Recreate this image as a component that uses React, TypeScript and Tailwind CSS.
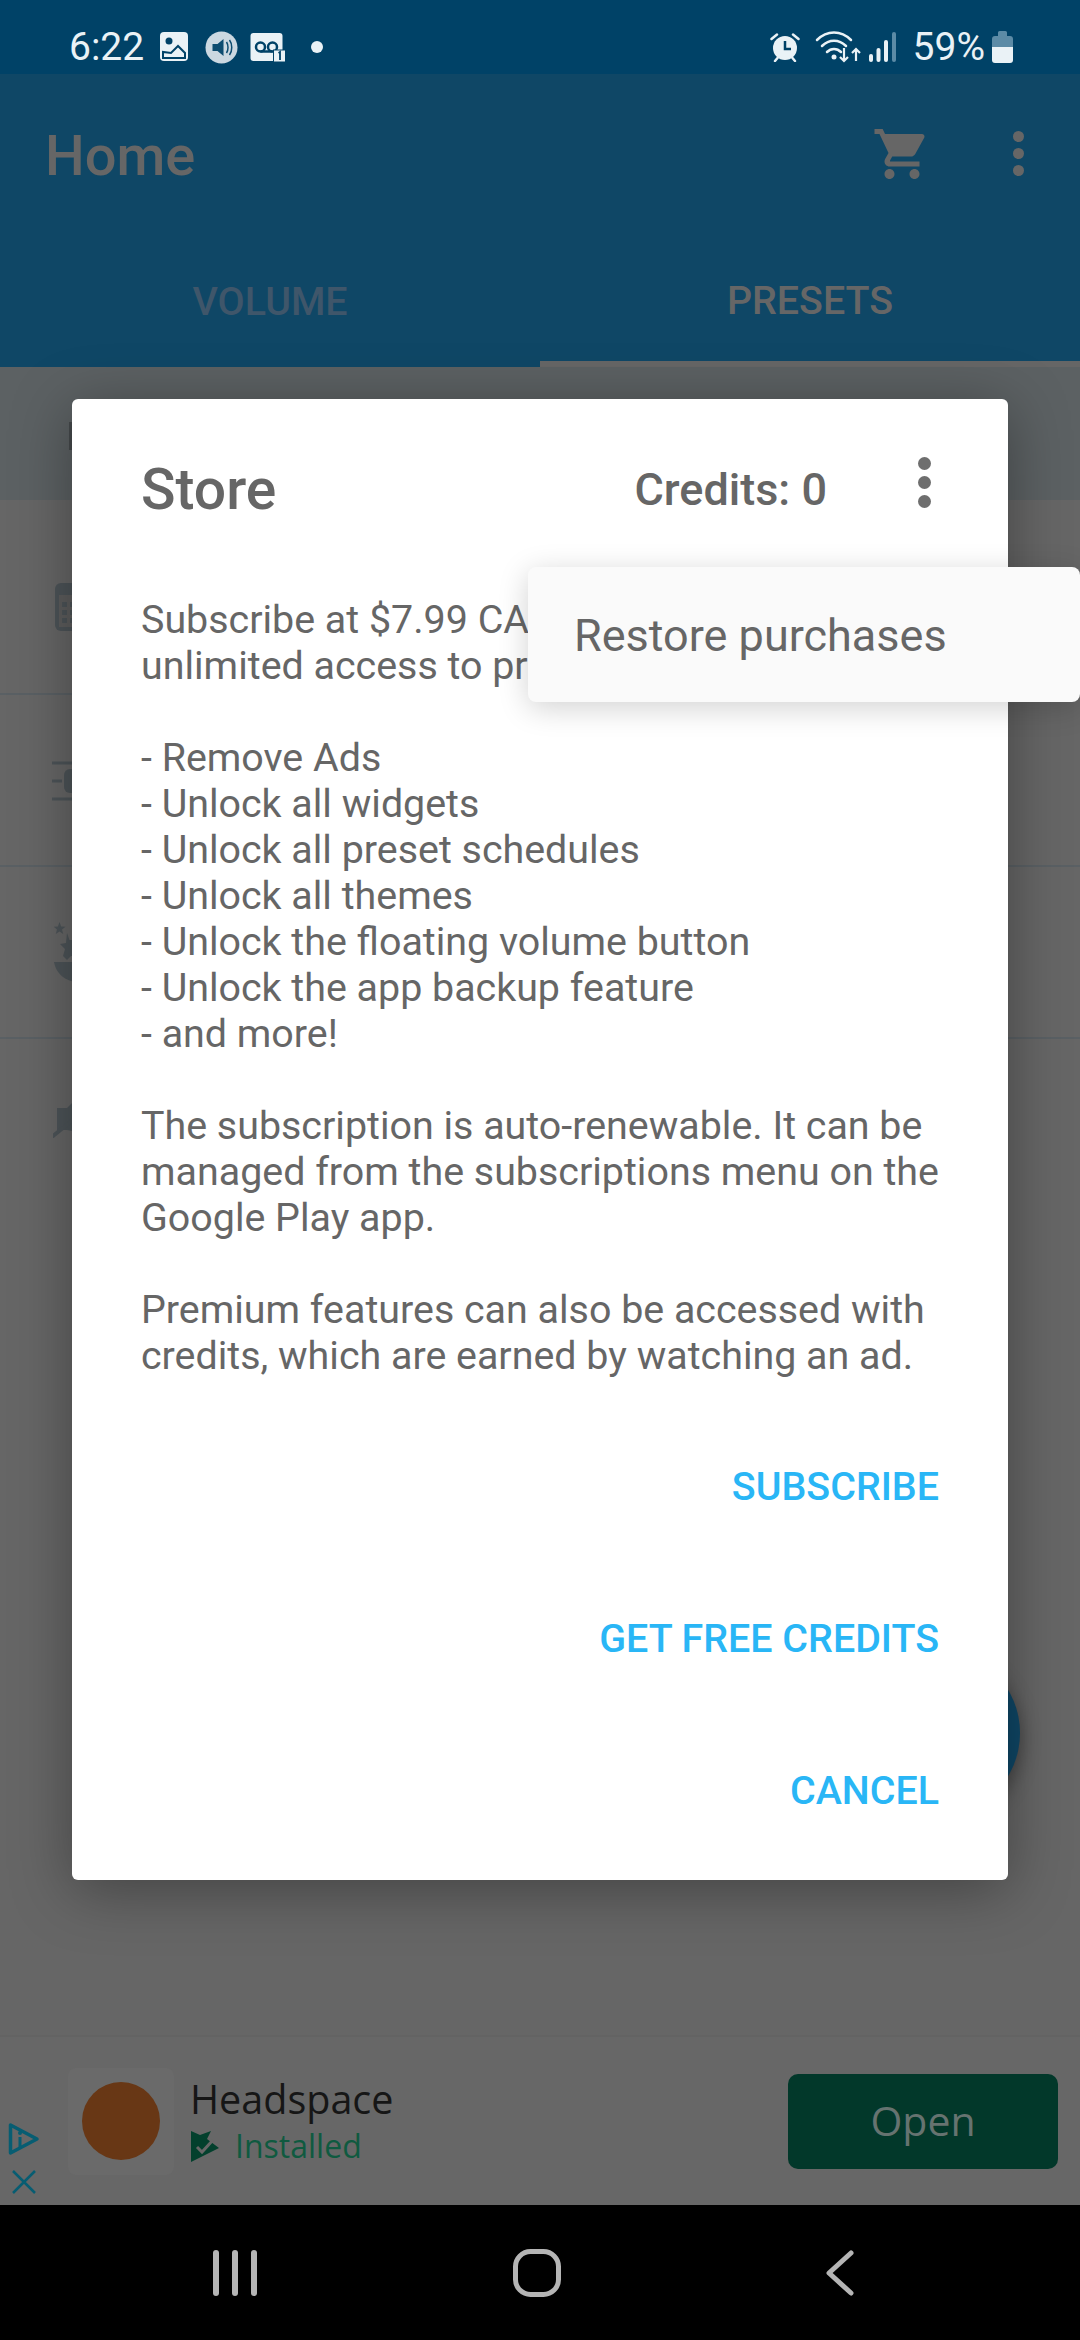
const features = [
    '- Remove Ads',
    '- Unlock all widgets',
    '- Unlock all preset schedules',
    '- Unlock all themes',
    '- Unlock the floating volume button',
    '- Unlock the app backup feature',
    '- and more!',
];

const actions = ['SUBSCRIBE', 'GET FREE CREDITS', 'CANCEL'];

function StatusBar() {
    return (
        <div className="flex h-[74px] items-center bg-[#004267] pt-[20px] pr-[67px] pl-[69px] text-[#eaf2f6]">
            <span className="w-[91px] text-[39px] leading-none">6:22</span>
            {/* picture */}
            <svg width="28" height="30" viewBox="0 0 28 30">
                <rect width="28" height="29" rx="4" fill="currentColor" />
                <circle cx="9" cy="9" r="3.5" fill="#004267" />
                <path d="M3 26v-6l8 1 7-7 7 7v5z" fill="none" stroke="#004267" strokeWidth="2" />
            </svg>
            {/* media volume */}
            <svg className="ml-[17px]" width="33" height="33" viewBox="0 0 32 33">
                <circle cx="16" cy="16.5" r="16" fill="#cbd8e1" />
                <path d="M7 13h5l6-5v17l-6-5H7z" fill="#0d4c70" />
                <path d="M21 11c2 3 2 8 0 11M24 9c3 4 3 11 0 15" fill="none" stroke="#0d4c70" strokeWidth="1.5" />
            </svg>
            {/* voicemail */}
            <svg className="ml-[12px]" width="36" height="29" viewBox="0 0 35 29">
                <rect width="32" height="28" rx="3" fill="currentColor" />
                <circle cx="10" cy="14" r="4.5" fill="none" stroke="#004267" strokeWidth="2.5" />
                <circle cx="22" cy="14" r="4.5" fill="none" stroke="#004267" strokeWidth="2.5" />
                <path d="M10 18.5h12" stroke="#004267" strokeWidth="2.5" />
                <rect x="23" y="17" width="12" height="12" fill="currentColor" stroke="#004267" strokeWidth="1" />
                <path d="M28 20l1.5-1v8" fill="none" stroke="#004267" strokeWidth="1.8" />
            </svg>
            <span className="ml-[25px] h-[12px] w-[12px] rounded-full bg-current" />
            <div className="flex-1" />
            {/* alarm */}
            <svg width="30" height="30" viewBox="0 0 30 30">
                <circle cx="15" cy="16" r="12" fill="currentColor" />
                <path d="M15 9v8h6" fill="none" stroke="#004267" strokeWidth="2.5" />
                <path d="M1.5 7L7 2.5M28.5 7L23 2.5M5 29l2.5-3M25 29l-2.5-3" stroke="currentColor" strokeWidth="2.5" strokeLinecap="round" />
            </svg>
            {/* wifi */}
            <svg className="ml-[15px]" width="46" height="34" viewBox="0 0 46 34">
                <path d="M2 10C12 0 26 0 36 10M7 16c7-7 17-7 24 0M12 22c4-4 10-4 14 0" fill="none" stroke="currentColor" strokeWidth="2.5" strokeLinecap="round" />
                <circle cx="19" cy="27" r="2.5" fill="currentColor" />
                <path d="M29 18v13m-4-4l4 4 4-4M41 31V19m-4 4l4-4 4 4" fill="none" stroke="currentColor" strokeWidth="2.2" />
            </svg>
            {/* signal */}
            <svg className="ml-[8px]" width="27" height="30" viewBox="0 0 27 30">
                <rect x="0" y="22" width="4" height="8" rx="2" fill="currentColor" />
                <rect x="7.5" y="16" width="4" height="14" rx="2" fill="currentColor" />
                <rect x="15" y="8" width="4" height="22" rx="2" fill="currentColor" />
                <rect x="23" y="0" width="4" height="30" rx="2" fill="#5c8ba6" />
            </svg>
            <span className="ml-[17px] text-[39px] leading-none">59%</span>
            {/* battery */}
            <svg className="ml-[7px]" width="21" height="32" viewBox="0 0 21 32">
                <path d="M6 1.5a1.5 1.5 0 0 1 1.5-1.5h6a1.5 1.5 0 0 1 1.5 1.5V5h3a3 3 0 0 1 3 3v8H0V8a3 3 0 0 1 3-3h3z" fill="#5c8ba6" />
                <path d="M0 16h21v13a3 3 0 0 1-3 3H3a3 3 0 0 1-3-3z" fill="currentColor" />
            </svg>
        </div>
    );
}

function AppBar() {
    return (
        <div className="relative flex h-[293px] flex-col bg-[#0f4766]">
            <div className="flex h-[163px] items-center pr-[56px] pl-[45px]">
                <span className="flex-1 text-[56px] leading-none font-medium text-[#666666]">Home</span>
                <svg className="mr-[81px] mb-[4px] text-[#666666]" width="60" height="60" viewBox="0 0 24 24" fill="currentColor">
                    <path d="M7 18c-1.1 0-1.99.9-1.99 2S5.900 22 7 22s2-.9 2-2-.9-2-2-2zM1 2v2h2l3.6 7.59-1.35 2.45c-.16.28-.25.61-.25.96 0 1.1.9 2 2 2h12v-2H7.42c-.14 0-.25-.11-.25-.25l.03-.12.9-1.63h7.45c.75 0 1.41-.41 1.75-1.03l3.58-6.49c.08-.14.12-.31.12-.48 0-.55-.45-1-1-1H5.21l-.94-2H1zm16 16c-1.1 0-1.99.9-1.99 2s.89 2 1.99 2 2-.9 2-2-.9-2-2-2z" />
                </svg>
                <div className="mb-[4px] flex flex-col gap-[6px] text-[#666666]">
                    <span className="h-[11px] w-[11px] rounded-full bg-current" />
                    <span className="h-[11px] w-[11px] rounded-full bg-current" />
                    <span className="h-[11px] w-[11px] rounded-full bg-current" />
                </div>
            </div>
            <div className="flex h-[130px]">
                <div className="flex flex-1 items-center justify-center text-[39.4px] font-medium text-[#3f566a]">VOLUME</div>
                <div className="flex flex-1 items-center justify-center border-b-[6px] border-[#666666] pt-[4px] text-[39.4px] font-medium text-[#666666]">PRESETS</div>
            </div>
        </div>
    );
}

function PresetList() {
    return (
        <div className="flex flex-1 flex-col bg-[#666666]">
            <div className="h-[133px] bg-[#5c6163] pt-[55px] pl-[69px]">
                <div className="h-[28px] w-[3px] bg-[#45494b]" />
            </div>
            <div className="flex h-[195px] items-center border-b-2 border-[#5a6064] pt-[20px] pl-[55px]">
                <svg width="60" height="60" viewBox="0 0 60 60" className="text-[#4d5458]">
                    <rect x="0" y="6" width="50" height="48" rx="6" fill="currentColor" />
                    <rect x="4" y="18" width="42" height="32" fill="#5d5d5d" />
                    <path d="M7 25h5v5H7zM15 25h5v5h-5zM7 33h5v5H7zM15 33h5v5h-5zM7 41h5v5H7zM15 41h5v5h-5z" fill="#4d5458" />
                </svg>
            </div>
            <div className="flex h-[172px] items-center border-b-2 border-[#5a6064] pl-[52px]">
                <svg width="60" height="48" viewBox="0 0 60 48" className="text-[#4d5458]">
                    <path d="M0 7h40M0 25h10M0 43h40" stroke="currentColor" strokeWidth="3" />
                    <rect x="12" y="13" width="20" height="24" rx="6" fill="currentColor" />
                </svg>
            </div>
            <div className="flex h-[172px] items-center border-b-2 border-[#5a6064] pl-[54px]">
                <svg width="60" height="60" viewBox="0 0 60 60" className="text-[#4d5458]">
                    <path d="M5.5 0l1.6 4.4 4.4.3-3.5 2.9 1.2 4.4-3.700-2.5-3.700 2.5 1.200-4.400L-.5 4.700l4.400-.3z" fill="currentColor" />
                    <path d="M13 11l2.5 7h7.500v16h-6l-4 4-4-4 2-7-5-5 6-1z" fill="currentColor" />
                    <path d="M0 40h24v20C12 60 2 52 0 40z" fill="currentColor" />
                </svg>
            </div>
            <div className="flex h-[172px] items-center pb-[14px] pl-[53px]">
                <svg width="60" height="60" viewBox="0 0 60 60" className="text-[#4d5458]">
                    <path d="M4 20h10l10-10v34l-10-2H4z" fill="currentColor" />
                    <path d="M0 48L32 22" stroke="currentColor" strokeWidth="4" strokeLinecap="round" />
                </svg>
            </div>
        </div>
    );
}

function AdBanner() {
    return (
        <div className="flex h-[170px] items-center border-t-2 border-[#636363] bg-[#676767] pr-[22px] pl-[8px]">
            <div className="flex w-[32px] flex-col items-center gap-[13px] self-end pb-[10px]">
                <svg width="32" height="34" viewBox="0 0 32 34" className="text-[#075d72]">
                    <path d="M2.5 3v28L29 17z" fill="none" stroke="currentColor" strokeWidth="3.5" strokeLinejoin="round" />
                    <path d="M12 15v11" stroke="currentColor" strokeWidth="3" />
                    <circle cx="12" cy="11" r="2" fill="currentColor" />
                </svg>
                <svg width="26" height="26" viewBox="0 0 26 26" className="text-[#075d72]">
                    <path d="M2 2l22 22M24 2L2 24" stroke="currentColor" strokeWidth="2.5" />
                </svg>
            </div>
            <div className="ml-[28px] flex h-[107px] w-[106px] items-center justify-center rounded-[8px] bg-[#6a6a6a]">
                <span className="h-[78px] w-[78px] rounded-full bg-[#683715]" />
            </div>
            <div className="ml-[16px] flex flex-1 flex-col gap-[4px]">
                <span className="text-[39.5px] leading-[46px] text-[#161616] [font-family:'Open_Sans',sans-serif]">Headspace</span>
                <div className="flex items-center">
                    <svg width="30" height="32" viewBox="0 0 30 32" className="text-[#03402d]">
                        <path d="M1 1l9 4 11-4-4 8 12 9L1 32z" fill="currentColor" />
                        <path d="M7 17l5 5 11-12" fill="none" stroke="#676767" strokeWidth="3" />
                    </svg>
                    <span className="ml-[15px] text-[32px] leading-[40px] text-[#0f5a40] [font-family:'Open_Sans',sans-serif]">Installed</span>
                </div>
            </div>
            <div className="flex h-[95px] w-[270px] items-center justify-center rounded-[10px] bg-[#02382a] text-[41px] text-[#667370] [font-family:'Open_Sans',sans-serif]">
                Open
            </div>
        </div>
    );
}

function NavBar() {
    return (
        <div className="flex h-[135px] items-center bg-black text-[#b5b5b5]">
            <div className="ml-[213px] flex h-[46px] gap-[13px]">
                <span className="w-[6px] rounded-full bg-current" />
                <span className="w-[6px] rounded-full bg-current" />
                <span className="w-[6px] rounded-full bg-current" />
            </div>
            <svg className="ml-[256px]" width="48" height="48" viewBox="0 0 48 48">
                <rect x="2.5" y="2.5" width="43" height="43" rx="15" fill="none" stroke="currentColor" strokeWidth="5" />
            </svg>
            <svg className="ml-[265px]" width="28" height="46" viewBox="0 0 28 46">
                <path d="M25 3L3 23l22 20" fill="none" stroke="currentColor" strokeWidth="5" strokeLinecap="round" strokeLinejoin="round" />
            </svg>
        </div>
    );
}

function StoreDialog() {
    return (
        <div className="absolute top-[399px] left-[72px] flex h-[1481px] w-[936px] flex-col rounded-[6px] bg-white px-[69px] text-[#666666] shadow-[0_10px_60px_rgba(0,0,0,0.35)]">
            <div className="flex h-[198px] items-start pt-[58px]">
                <span className="flex-1 text-[57px] leading-[66px] font-medium">Store</span>
                <span className="mt-[8px] text-[45px] leading-[50px] font-medium">Credits: 0</span>
                <div className="mr-[8px] ml-[91px] flex flex-col gap-[6px] text-[#6e6e6e]">
                    <span className="h-[13px] w-[13px] rounded-full bg-current" />
                    <span className="h-[13px] w-[13px] rounded-full bg-current" />
                    <span className="h-[13px] w-[13px] rounded-full bg-current" />
                </div>
            </div>
            <div className="text-[39.4px] leading-[46px]">
                <p>
                    Subscribe at $7.99 CAD per month for
                    <br />
                    unlimited access to premium features.
                </p>
                <div className="mt-[46px]">
                    {features.map((item) => (
                        <div key={item}>{item}</div>
                    ))}
                </div>
                <p className="mt-[46px]">
                    The subscription is auto-renewable. It can be
                    <br />
                    managed from the subscriptions menu on the
                    <br />
                    Google Play app.
                </p>
                <p className="mt-[46px]">
                    Premium features can also be accessed with
                    <br />
                    credits, which are earned by watching an ad.
                </p>
            </div>
            <div className="mt-[85px] flex flex-col items-end gap-[106px]">
                {actions.map((label) => (
                    <button key={label} className="text-[39.4px] leading-[46px] font-medium text-[#29b6f6]">
                        {label}
                    </button>
                ))}
            </div>
        </div>
    );
}

export default function App() {
    return (
        <div className="relative flex h-[2340px] w-[1080px] flex-col overflow-hidden [font-family:Roboto,sans-serif]">
            <StatusBar />
            <AppBar />
            <PresetList />
            <AdBanner />
            <NavBar />

            {/* FAB peeking out behind the dialog */}
            <div className="absolute top-[1649px] left-[852px] h-[168px] w-[168px] rounded-full bg-[#0f4766] shadow-[0_6px_20px_rgba(0,0,0,0.4)]" />

            <StoreDialog />

            {/* overflow menu */}
            <div className="absolute top-[567px] left-[528px] flex h-[135px] w-[552px] items-center rounded-[8px] bg-[#fafafa] pt-[2px] pl-[46px] text-[45px] text-[#666666] shadow-[0_6px_30px_rgba(0,0,0,0.18)]">
                Restore purchases
            </div>
        </div>
    );
}
